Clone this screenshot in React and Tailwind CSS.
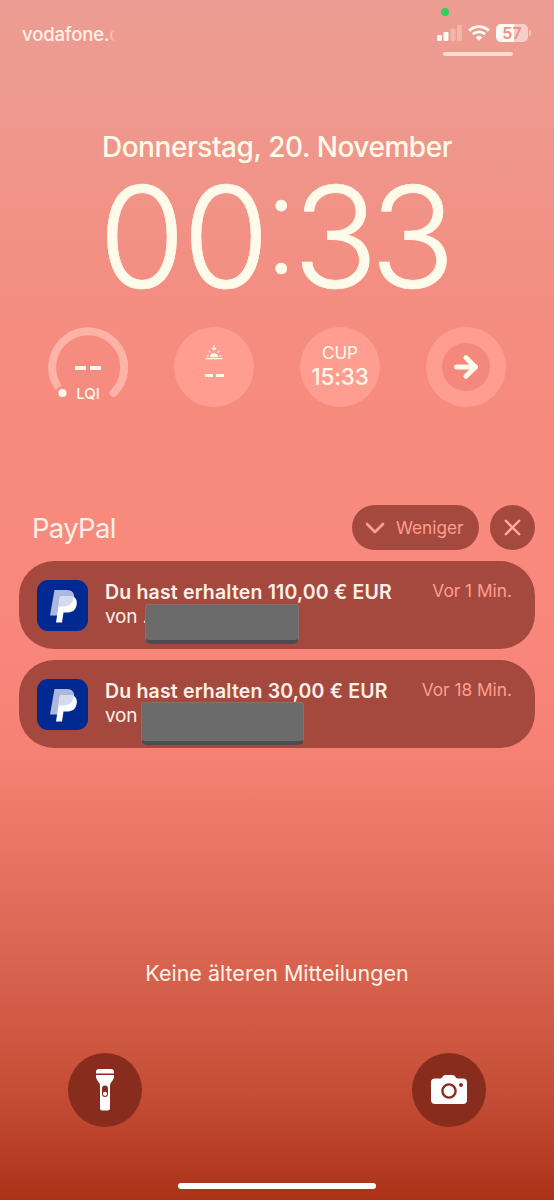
import React from 'react';
import { ArrowRight, ChevronDown, X } from 'lucide-react';

const notifications = [
  { id: 1, title: 'Du hast erhalten 110,00 € EUR', from: 'von .', time: 'Vor 1 Min.', mask: 'left-[40px] top-[0px] w-[154px] h-[40px]' },
  { id: 2, title: 'Du hast erhalten 30,00 € EUR', from: 'von', time: 'Vor 18 Min.', mask: 'left-[36px] top-[-1px] w-[163px] h-[43px]' },
];

const StatusBar = () => (
  <header className="flex justify-between h-[128px] pl-[22px] pr-[22px]">
    <div className="flex pt-[23px] text-[18.5px] leading-[23px] font-medium text-[#fff1e6] tracking-[-0.15px] whitespace-nowrap">
      vodafone.
      <span className="w-[7px] overflow-hidden bg-linear-to-r from-[#fff1e6]/70 to-transparent bg-clip-text text-transparent">d</span>
    </div>
    <div className="flex flex-col w-[95px]">
      <div className="mt-[8px] ml-[4px] w-2 h-2 rounded-full bg-[#30d158]" />
      <div className="flex items-center mt-[8px] h-[18px]">
        <svg width="26" height="16" viewBox="0 0 26 16" fill="#fffaf2">
          <rect x="0" y="10" width="5" height="6" rx="1.3" />
          <rect x="6.5" y="7" width="5" height="9" rx="1.3" />
          <rect x="13.5" y="3.5" width="5" height="12.5" rx="1.3" opacity="0.28" />
          <rect x="20" y="0" width="5" height="16" rx="1.3" opacity="0.28" />
        </svg>
        <svg className="ml-[5px]" width="22" height="16" viewBox="0 0 22 16" fill="none" stroke="#fffaf2" strokeWidth="2.8">
          <path d="M1.2 5.7a14 14 0 0 1 19.6 0" />
          <path d="M4.8 9.3a9 9 0 0 1 12.4 0" />
          <path d="M11 15.8l-3.4-3.5a5 5 0 0 1 6.8 0z" fill="#fffaf2" stroke="none" />
        </svg>
        <div className="flex items-center justify-center ml-[6px] w-[32px] h-[18px] shrink-0 rounded-[5px] bg-linear-to-r from-[#fffaf4] from-55% to-[#f8cec6] to-55% text-[16px] leading-[18px] font-semibold text-[#ea9288]">
          57
        </div>
        <div className="ml-px w-[2px] h-[6px] shrink-0 rounded-r-full bg-[#f6c5bd]" />
      </div>
      <div className="mt-[10px] ml-[6px] w-[70px] h-1 rounded-full bg-[#ffdccf]" />
    </div>
  </header>
);

const Widgets = () => (
  <section className="flex justify-between px-12 h-20 text-[#fff9ea]">
    <div className="relative flex flex-col items-center w-20 h-20">
      <svg className="absolute inset-0" width="80" height="80" viewBox="0 0 80 80" fill="none">
        <path d="M9.7 59.5A36 36 0 1 1 65.5 66" stroke="#ffb3a8" strokeWidth="8" strokeLinecap="round" />
        <circle cx="14.5" cy="66" r="7" fill="#f68d81" />
        <circle cx="14.5" cy="66" r="4" fill="#fffaf0" />
      </svg>
      <div className="relative flex gap-1 mt-[39px]">
        <span className="w-[11px] h-[3.5px] bg-[#fff9ea]" />
        <span className="w-[11px] h-[3.5px] bg-[#fff9ea]" />
      </div>
      <span className="relative mt-[16px] text-[15px] leading-[16px] font-medium">LQI</span>
    </div>
    <div className="flex flex-col items-center w-20 h-20 rounded-full bg-[#ff9d91]">
      <svg className="mt-[18px]" width="18" height="15" viewBox="0 0 18 15" fill="none" stroke="#fff9ea" strokeWidth="1.2" strokeLinecap="round">
        <path d="M9 .7v4.2M7.2 3.3L9 5l1.8-1.7M1 13.6h16M2 10.9h1.2M14.8 10.9H16M4 6.2l.9.9M14 6.2l-.9.9" />
        <path d="M5 12.2a4 4 0 0 1 8 0z" fill="#fff9ea" stroke="none" />
      </svg>
      <div className="flex gap-[3px] mt-[14px]">
        <span className="w-2 h-[3px] bg-[#fff9ea]" />
        <span className="w-2 h-[3px] bg-[#fff9ea]" />
      </div>
    </div>
    <div className="flex flex-col items-center w-20 h-20 pt-[15px] rounded-full bg-[#ff9d91]">
      <span className="text-[17px] leading-[22px]">CUP</span>
      <span className="text-[22.5px] leading-[25px] font-medium tracking-[-0.2px]">15:33</span>
    </div>
    <div className="flex items-center justify-center w-20 h-20 rounded-full bg-[#ff9d91]">
      <div className="flex items-center justify-center w-12 h-12 rounded-full bg-[#f4887d]">
        <ArrowRight size={32} strokeWidth={3.8} className="text-[#fffaec]" />
      </div>
    </div>
  </section>
);

const PayPalIcon = () => (
  <svg className="shrink-0" width="51" height="51" viewBox="0 0 51 51">
    <rect width="51" height="51" rx="11" fill="#002991" />
    <path d="M17.5 10h12.5c5 0 8 3.3 7 8.5L33 30h-9.5L22.5 35.5H13z" fill="#adb8df" />
    <path d="M23 16.5H36c3.5 1.7 4.5 5 3.5 9-1.2 5-4.5 7-9.5 7h-3.5L25 42.5h-6z" fill="#fff" />
    <path d="M23 16.5H36.8C36.5 23 32 26.5 27 26.5h-4c-1.3 0-1.6 1-1.8 2z" fill="#d5dbef" />
  </svg>
);

const NotificationCard = ({ item }) => (
  <article className="flex h-[88px] pt-[19px] pl-[18px] pr-[23px] rounded-[35px] bg-[#a5493f]">
    <PayPalIcon />
    <div className="flex-1 ml-[17px] text-[#fff0e7]">
      <div className="flex justify-between whitespace-nowrap">
        <h3 className="text-[19.5px] leading-[24px] font-semibold tracking-[0.17px]">{item.title}</h3>
        <span className="text-[17.3px] leading-[21px] text-[#ff9d90]">{item.time}</span>
      </div>
      <div className="relative">
        <p className="text-[19px] leading-[26px] tracking-[-0.2px]">{item.from}</p>
        <div className={`absolute ${item.mask} rounded-[3px] rounded-b-md bg-[#6b6b6b] border border-t-[#8a6f6d] border-x-[#85716f] border-b-4 border-b-[#4b4d52]`} />
      </div>
    </div>
  </article>
);

const FlashlightIcon = () => (
  <svg width="18" height="42" viewBox="0 0 18 42" fill="#fff">
    <path d="M0 4.5V3a3 3 0 0 1 3-3h12a3 3 0 0 1 3 3v1.5z" />
    <path d="M0 6h18v1.5c0 4-4 5.5-4 9V39a2.5 2.5 0 0 1-2.5 2.5h-5A2.5 2.5 0 0 1 4 39V16.5c0-3.5-4-5-4-9z" />
    <rect x="6" y="16.5" width="6" height="11.5" rx="3" fill="#882d1e" />
    <circle cx="9" cy="24.8" r="2.1" />
  </svg>
);

const CameraIcon = () => (
  <svg width="36" height="29" viewBox="0 0 36 29">
    <path d="M4 3.5h5.5c2 0 2-3.5 5-3.5h7c3 0 3 3.5 5 3.5H32a4 4 0 0 1 4 4V25a4 4 0 0 1-4 4H4a4 4 0 0 1-4-4V7.5a4 4 0 0 1 4-4z" fill="#fff" />
    <circle cx="18" cy="16" r="6.6" fill="none" stroke="#882d1e" strokeWidth="2.4" />
    <circle cx="30" cy="10" r="2" fill="#882d1e" />
  </svg>
);

const App = () => {
  return (
    <div className="flex flex-col w-[554px] h-[1200px] overflow-hidden font-['Inter',sans-serif] bg-[linear-gradient(to_bottom,#ec9d93_0px,#ef988d_120px,#f38e82_280px,#f78a7d_420px,#f9897d_560px,#f88579_680px,#f58174_755px,#e97465_850px,#da6552_950px,#cd5740_1040px,#c34a32_1110px,#b33a20_1170px,#ab3217_1200px)]">
      <StatusBar />

      {/* Date and clock */}
      <div className="flex flex-col items-center h-[199px] text-[#fffbea] whitespace-nowrap">
        <p className="text-[28px] leading-[38px] font-medium tracking-[-0.45px]">Donnerstag, 20. November</p>
        <h1 className="flex mt-[-1px] pr-[8px] text-[141px] leading-[144px] font-light [-webkit-text-stroke:0.7px_#fffbea]">
          <span className="tracking-[-3px]">0</span>
          <span className="tracking-[-8px]">0</span>
          <span className="mt-[-15px] font-extralight tracking-[-8px]">:</span>
          <span className="tracking-[-8px]">33</span>
        </h1>
      </div>

      <Widgets />

      {/* Notifications */}
      <main className="flex flex-col mt-[98px] px-[19px]">
        <div className="flex items-center h-[45px] pl-[13px]">
          <h2 className="flex-1 pt-px text-[27.5px] leading-[36px] text-[#fff0e8] tracking-[-0.7px]">PayPal</h2>
          <button className="flex items-center w-[127px] h-[45px] pl-[7px] rounded-full bg-[#a5493f] text-[#ff9d90]">
            <ChevronDown size={32} strokeWidth={2} />
            <span className="ml-[5px] pt-px text-[17.2px]">Weniger</span>
          </button>
          <button className="flex items-center justify-center ml-[11px] w-[45px] h-[45px] rounded-full bg-[#a5493f] text-[#ffae9f]">
            <X size={27} strokeWidth={2.1} />
          </button>
        </div>
        <div className="flex flex-col gap-[11px] mt-[11px]">
          {notifications.map((item) => (
            <NotificationCard key={item.id} item={item} />
          ))}
        </div>
      </main>

      <p className="mt-[210px] text-center text-[21.5px] leading-[30px] text-[#fff2e8]">Keine älteren Mitteilungen</p>

      {/* Shortcuts */}
      <footer className="flex flex-col flex-1 items-center justify-between mt-[64.5px] pb-[11px]">
        <div className="flex justify-between w-full px-[68px]">
          <button className="flex items-center justify-center w-[74px] h-[74px] rounded-full bg-[#882d1e]">
            <FlashlightIcon />
          </button>
          <button className="flex items-center justify-center w-[74px] h-[74px] rounded-full bg-[#882d1e]">
            <CameraIcon />
          </button>
        </div>
        <div className="w-[198px] h-[6px] rounded-full bg-white" />
      </footer>
    </div>
  );
};

export default App;
